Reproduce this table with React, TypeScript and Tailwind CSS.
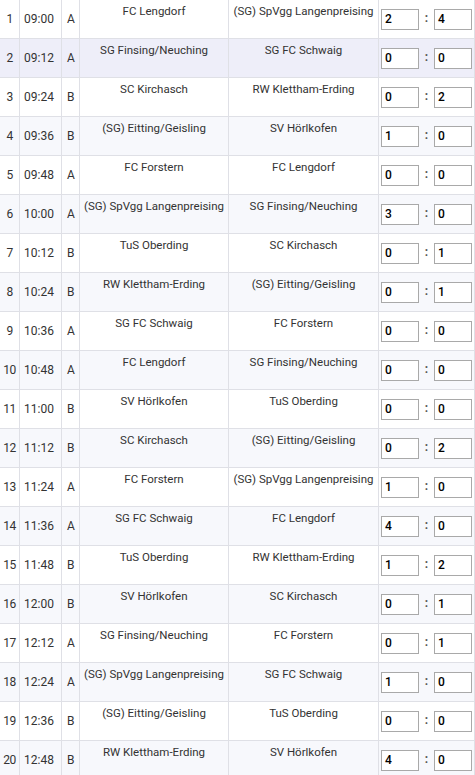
const matches: [string, string, string, string, string, string][] = [
  ['09:00', 'A', 'FC Lengdorf', '(SG) SpVgg Langenpreising', '2', '4'],
  ['09:12', 'A', 'SG Finsing/Neuching', 'SG FC Schwaig', '0', '0'],
  ['09:24', 'B', 'SC Kirchasch', 'RW Klettham-Erding', '0', '2'],
  ['09:36', 'B', '(SG) Eitting/Geisling', 'SV Hörlkofen', '1', '0'],
  ['09:48', 'A', 'FC Forstern', 'FC Lengdorf', '0', '0'],
  ['10:00', 'A', '(SG) SpVgg Langenpreising', 'SG Finsing/Neuching', '3', '0'],
  ['10:12', 'B', 'TuS Oberding', 'SC Kirchasch', '0', '1'],
  ['10:24', 'B', 'RW Klettham-Erding', '(SG) Eitting/Geisling', '0', '1'],
  ['10:36', 'A', 'SG FC Schwaig', 'FC Forstern', '0', '0'],
  ['10:48', 'A', 'FC Lengdorf', 'SG Finsing/Neuching', '0', '0'],
  ['11:00', 'B', 'SV Hörlkofen', 'TuS Oberding', '0', '0'],
  ['11:12', 'B', 'SC Kirchasch', '(SG) Eitting/Geisling', '0', '2'],
  ['11:24', 'A', 'FC Forstern', '(SG) SpVgg Langenpreising', '1', '0'],
  ['11:36', 'A', 'SG FC Schwaig', 'FC Lengdorf', '4', '0'],
  ['11:48', 'B', 'TuS Oberding', 'RW Klettham-Erding', '1', '2'],
  ['12:00', 'B', 'SV Hörlkofen', 'SC Kirchasch', '0', '1'],
  ['12:12', 'A', 'SG Finsing/Neuching', 'FC Forstern', '0', '1'],
  ['12:24', 'A', '(SG) SpVgg Langenpreising', 'SG FC Schwaig', '1', '0'],
  ['12:36', 'B', '(SG) Eitting/Geisling', 'TuS Oberding', '0', '0'],
  ['12:48', 'B', 'RW Klettham-Erding', 'SV Hörlkofen', '4', '0'],
];

function ScoreBox({ value }: { value: string }) {
  return (
    <div className="w-[38px] h-[21px] border border-[#a9a9a9] bg-white pl-[3px] flex items-center text-[12px] font-medium text-black">
      {value}
    </div>
  );
}

export default function App() {
  return (
    <div className="w-[475px] bg-white text-[12px] text-[#333]" style={{ fontFamily: 'Roboto, "Noto Sans", sans-serif' }}>
      {matches.map(([time, group, home, away, g1, g2], idx) => {
        const bg = idx === 1 ? 'bg-[#eeeef9]' : idx % 2 === 1 ? 'bg-[#f7f8fc]' : 'bg-white';
        return (
          <div
            key={idx}
            className={`grid grid-cols-[20px_42px_18px_149px_150px_96px] h-[39px] border-b border-[#dfe0e6] ${bg}`}
          >
            <div className="border-r border-[#dfe0e6] flex items-center justify-center tracking-[-0.5px]">{idx + 1}</div>
            <div className="border-r border-[#dfe0e6] pl-[4px] flex items-center">{time}</div>
            <div className="border-r border-[#dfe0e6] pl-[5px] flex items-center">{group}</div>
            <div className="border-r border-[#dfe0e6] pt-[3px] text-center text-[11.5px] leading-[16px]">{home}</div>
            <div className="border-r border-[#dfe0e6] pt-[3px] text-center text-[11.5px] leading-[16px]">{away}</div>
            <div className="border-r border-[#dfe0e6] pl-[2px] flex items-center">
              <ScoreBox value={g1} />
              <span className="w-[15px] text-center font-bold text-[#555] -mt-[3px]">:</span>
              <ScoreBox value={g2} />
            </div>
          </div>
        );
      })}
    </div>
  );
}
